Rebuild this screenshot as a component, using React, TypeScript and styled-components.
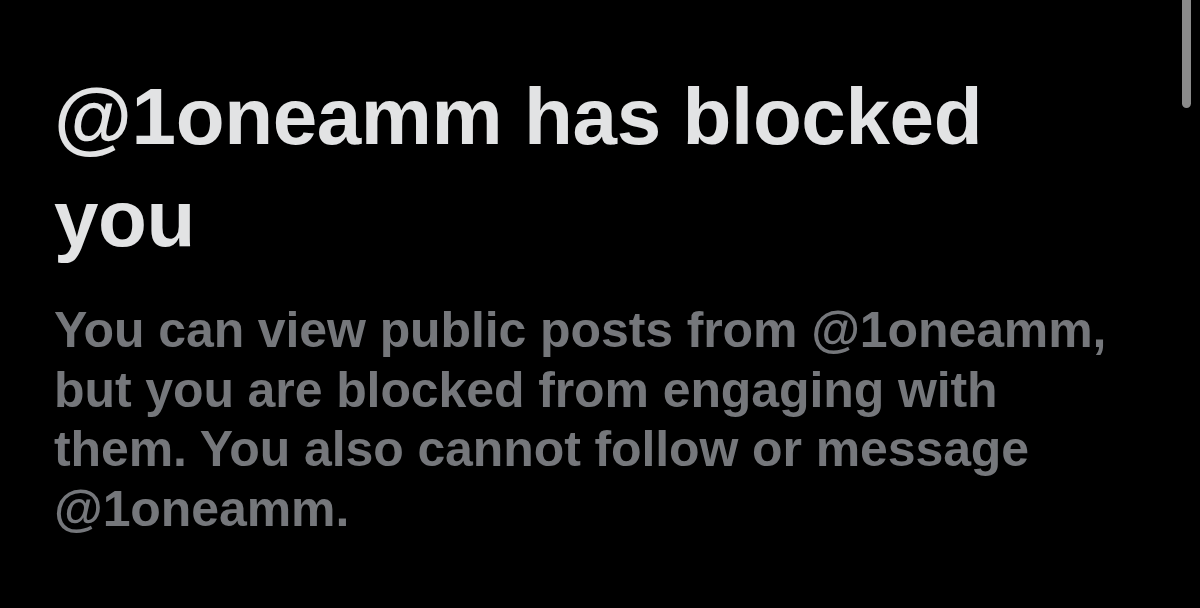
import React from "react";
import styled, { createGlobalStyle } from "styled-components";

const Global = createGlobalStyle`
  html, body {
    margin: 0;
    padding: 0;
    background: #000;
    height: 100%;
    overflow: hidden;
  }
  #root { height: 100%; }
`;

const Screen = styled.div`
  position: relative;
  width: 1200px;
  height: 608px;
  background: #000;
  box-sizing: border-box;
  padding: 66px 0 0 54px;
  font-family: "Liberation Sans", Arial, sans-serif;
  overflow: hidden;
`;

const Content = styled.div`
  width: 1080px;
  display: flex;
  flex-direction: column;
  gap: 31px;
`;

const Title = styled.h1`
  margin: 0;
  font-size: 80px;
  line-height: 102px;
  font-weight: 700;
  letter-spacing: -0.4px;
  color: #e2e3e4;
`;

const Message = styled.p`
  margin: 0;
  font-size: 50px;
  line-height: 59.5px;
  font-weight: 700;
  letter-spacing: -0.1px;
  color: #75777b;
`;

const Scrollbar = styled.div`
  position: absolute;
  top: -10px;
  right: 9px;
  width: 9px;
  height: 118px;
  border-radius: 5px;
  background: #8a8a8a;
`;

export default function App() {
  return (
    <>
      <Global />
      <Screen>
        <Content>
          <Title>@1oneamm has blocked you</Title>
          <Message>
            You can view public posts from @1oneamm, but you are blocked from
            engaging with them. You also cannot follow or message @1oneamm.
          </Message>
        </Content>
        <Scrollbar />
      </Screen>
    </>
  );
}
